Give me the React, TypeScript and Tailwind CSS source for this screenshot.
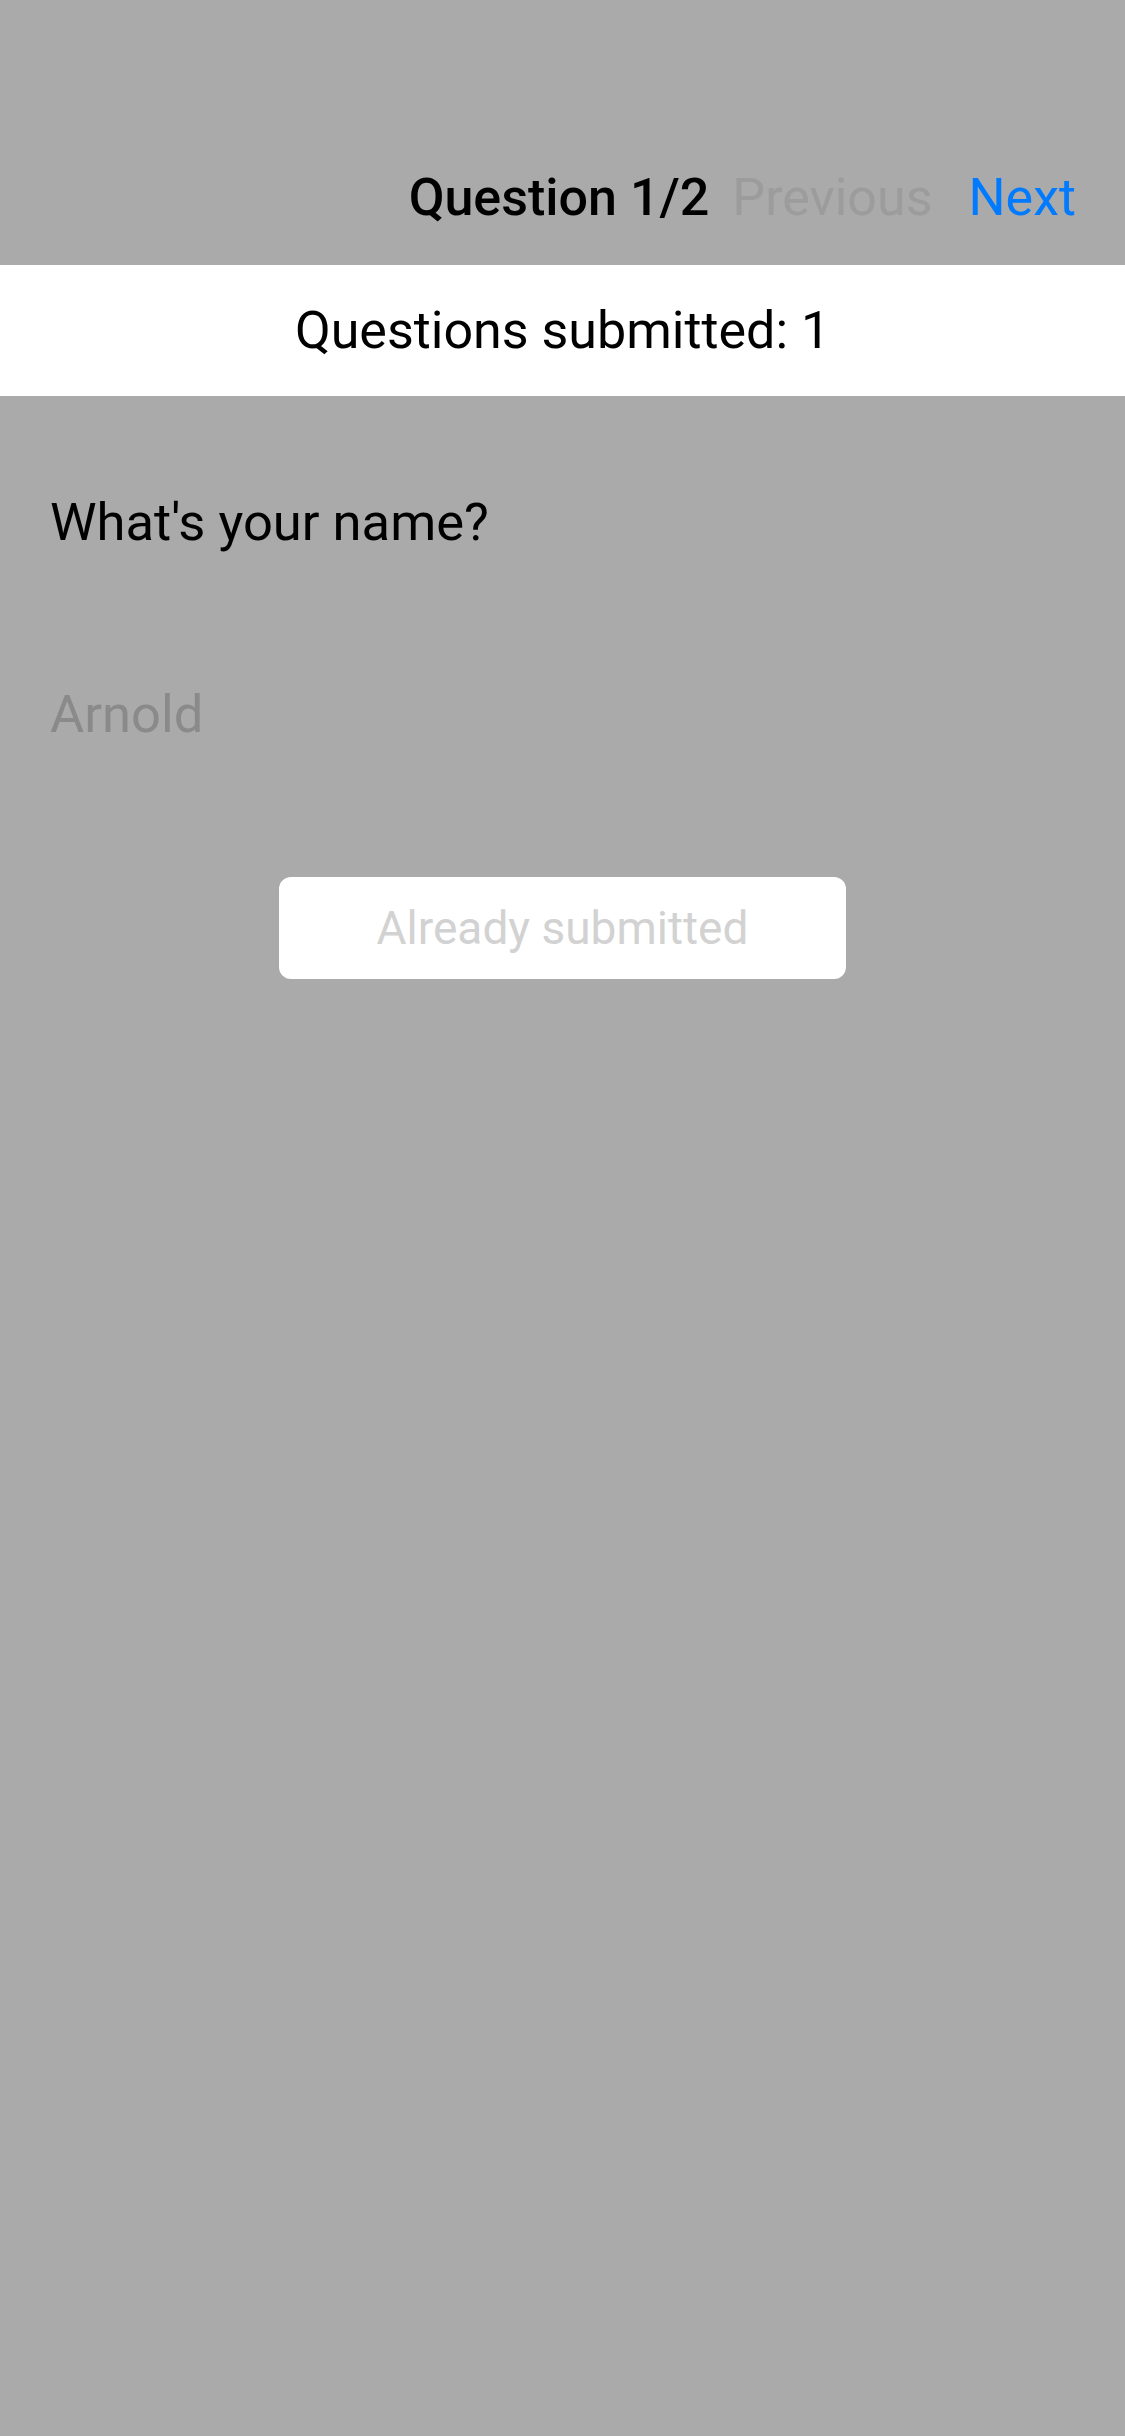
export default function App() {
  return (
    <div
      className="w-[1125px] h-[2436px] bg-[#aaaaaa] flex flex-col"
      style={{ fontFamily: "Roboto, 'Noto Sans', sans-serif" }}
    >
      <div className="h-[265px] flex items-start justify-end pt-[168px] pr-[49px] text-[52px] leading-[60px]">
        <span className="font-medium text-black">Question 1/2</span>
        <span className="text-[#9c9c9c] ml-[23px]">Previous</span>
        <span className="text-[#007aff] ml-[36px]">Next</span>
      </div>
      <div className="h-[131px] bg-white flex items-center justify-center text-[52px] text-black">
        Questions submitted: 1
      </div>
      <div className="px-[50px] pt-[96px] text-[52.5px] leading-[60px] text-black">What's your name?</div>
      <div className="px-[50px] pt-[132px] text-[52.5px] leading-[60px] text-[#8a8a8a]">Arnold</div>
      <div className="flex justify-center pt-[133px]">
        <div className="w-[567px] h-[102px] bg-white rounded-[12px] flex items-center justify-center text-[46px] text-[#d2d2d2]">
          Already submitted
        </div>
      </div>
    </div>
  );
}
